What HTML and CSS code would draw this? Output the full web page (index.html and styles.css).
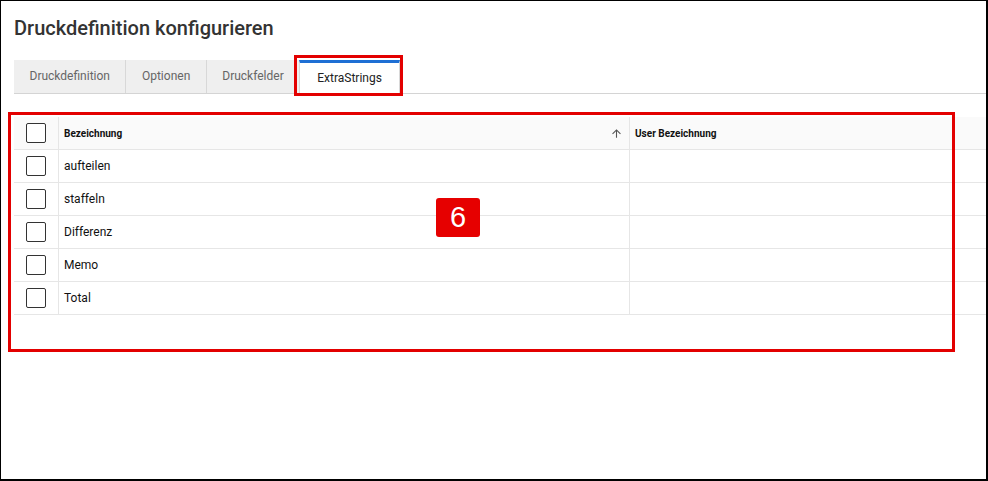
FILE: index.html
```html
<!DOCTYPE html>
<html>
<head>
  <meta charset="utf-8">
  <link rel="stylesheet" href="styles.css">
</head>
<body>
  <div class="page">
    <div class="title">Druckdefinition konfigurieren</div>

    <div class="tabs">
      <div class="tab">Druckdefinition</div>
      <div class="tab">Optionen</div>
      <div class="tab">Druckfelder</div>
      <div class="tab tab-active">ExtraStrings</div>
    </div>

    <div class="grid">
      <div class="row row-head">
        <div class="cell cell-check"><span class="checkbox"></span></div>
        <div class="cell cell-sort">
          <span>Bezeichnung</span>
          <svg class="sort-icon" width="13" height="13" viewBox="0 0 24 24">
            <path d="M4 12l1.41 1.41L11 7.83V20h2V7.83l5.58 5.59L20 12l-8-8-8 8z" fill="#555"/>
          </svg>
        </div>
        <div class="cell">User Bezeichnung</div>
      </div>
      <div class="row">
        <div class="cell cell-check"><span class="checkbox"></span></div>
        <div class="cell">aufteilen</div>
        <div class="cell"></div>
      </div>
      <div class="row">
        <div class="cell cell-check"><span class="checkbox"></span></div>
        <div class="cell">staffeln</div>
        <div class="cell"></div>
      </div>
      <div class="row">
        <div class="cell cell-check"><span class="checkbox"></span></div>
        <div class="cell">Differenz</div>
        <div class="cell"></div>
      </div>
      <div class="row">
        <div class="cell cell-check"><span class="checkbox"></span></div>
        <div class="cell">Memo</div>
        <div class="cell"></div>
      </div>
      <div class="row">
        <div class="cell cell-check"><span class="checkbox"></span></div>
        <div class="cell">Total</div>
        <div class="cell"></div>
      </div>
    </div>
  </div>

  <!-- annotation overlays -->
  <div class="mark mark-tab"></div>
  <div class="mark mark-grid"></div>
  <div class="badge">6</div>
</body>
</html>
```

FILE: styles.css
```css
* {
  margin: 0;
  padding: 0;
  box-sizing: border-box;
}

html, body {
  background: white;
}

body {
  position: relative;
  width: 988px;
  height: 481px;
  font-family: Roboto, "Liberation Sans", sans-serif;
  color: #222;
}

.page {
  width: 988px;
  height: 481px;
  border: 1px solid #000;
  border-right-width: 2px;
  border-bottom-width: 2px;
  padding: 15px 0 0 13px;
}

.title {
  font-size: 20px;
  font-weight: 500;
  line-height: 24px;
  color: #333;
  margin-bottom: 20px;
}

.tabs {
  display: flex;
  border-bottom: 1px solid #d4d4d4;
}

.tab {
  height: 33px;
  line-height: 33px;
  padding: 0 15.5px;
  font-size: 12px;
  color: #666;
  background: #efefef;
  border-right: 1px solid #d8d8d8;
}

.tab:nth-child(3) {
  border-right: none;
}

.tab-active {
  background: white;
  color: #222;
  border-top: 3px solid #1e6fd4;
  border-left: 1px solid #d8d8d8;
  line-height: 30px;
  height: 34px;
  margin-bottom: -1px;
  padding: 0 17px;
}

.grid {
  margin-top: 23px;
}

.row {
  display: grid;
  grid-template-columns: 44px 571px 1fr;
  height: 33px;
  border-bottom: 1px solid #e6e6e6;
  font-size: 12px;
  color: #111;
}

.row-head {
  background: #fafafa;
  font-size: 10px;
  font-weight: bold;
}

.cell {
  display: flex;
  align-items: center;
  padding-left: 5px;
  border-left: 1px solid #e6e6e6;
}

.cell-check {
  justify-content: center;
  padding-left: 0;
  border-left: none;
}

.cell-sort {
  justify-content: space-between;
  padding-right: 6px;
}

.checkbox {
  width: 20px;
  height: 20px;
  border: 1px solid #333;
  border-radius: 2px;
  background: white;
}

.mark {
  position: absolute;
  border: 3px solid #e30000;
}

.mark-tab {
  left: 294px;
  top: 55px;
  width: 109px;
  height: 41px;
}

.mark-grid {
  left: 8px;
  top: 112px;
  width: 947px;
  height: 240px;
}

.badge {
  position: absolute;
  left: 436px;
  top: 198px;
  width: 44px;
  height: 39px;
  border-radius: 3px;
  background: #e60000;
  color: white;
  font-family: "Liberation Sans", Arial, sans-serif;
  font-size: 29px;
  line-height: 39px;
  text-align: center;
}
```
